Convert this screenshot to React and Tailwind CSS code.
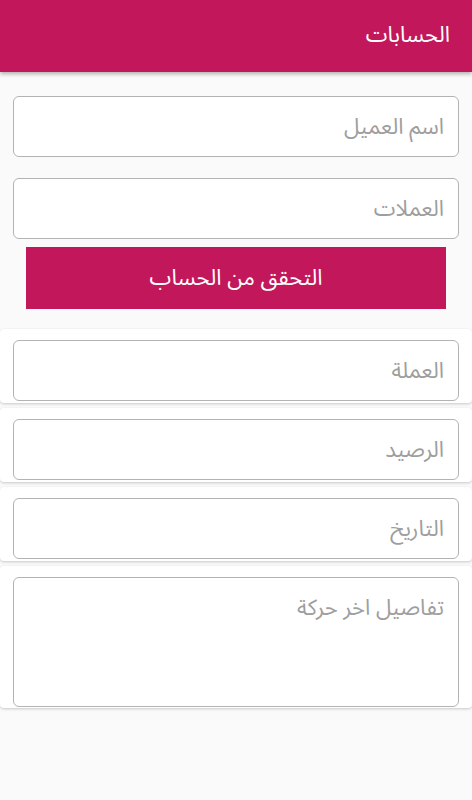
export default function App() {
  const fieldClass =
    "w-full h-[61px] rounded-[6px] border border-[#b3b3b3] bg-white px-[14px] text-[22px] text-[#333] placeholder:text-[#9e9e9e] outline-none";

  const cardFields = ["العملة", "الرصيد", "التاريخ"];

  return (
    <div
      dir="rtl"
      className="min-h-screen w-[472px] bg-[#fafafa]"
      style={{ fontFamily: '"Noto Sans Arabic", "DejaVu Sans", "Noto Sans", sans-serif' }}
    >
      {/* Toolbar */}
      <div className="h-[72px] bg-[#c2185b] flex items-center px-[22px] pb-[2px] shadow-[0_2px_4px_rgba(0,0,0,0.3)] relative z-10">
        <h1 className="text-white text-[22px] font-normal">الحسابات</h1>
      </div>

      {/* Lookup form */}
      <div className="px-[13px] pt-[24px] pb-[20px] flex flex-col">
        <input className={fieldClass} placeholder="اسم العميل" />
        <input className={fieldClass + " mt-[21px]"} placeholder="العملات" />
        <button className="mt-[8px] mx-[13px] h-[62px] bg-[#c2185b] text-white text-[22px]">
          التحقق من الحساب
        </button>
      </div>

      {/* Result cards */}
      <div className="flex flex-col gap-[5px]">
        {cardFields.map((label) => (
          <div
            key={label}
            className="bg-white rounded-[4px] pt-[11px] px-[13px] pb-[2px] shadow-[0_1px_3px_rgba(0,0,0,0.2)]"
          >
            <input className={fieldClass} placeholder={label} />
          </div>
        ))}
        <div className="bg-white rounded-[4px] pt-[11px] px-[13px] pb-[1px] shadow-[0_1px_3px_rgba(0,0,0,0.2)]">
          <textarea
            className="w-full h-[130px] rounded-[6px] border border-[#b3b3b3] bg-white px-[14px] pt-[14px] text-[22px] text-[#333] placeholder:text-[#9e9e9e] outline-none resize-none block"
            placeholder="تفاصيل اخر حركة"
          />
        </div>
      </div>
    </div>
  );
}
